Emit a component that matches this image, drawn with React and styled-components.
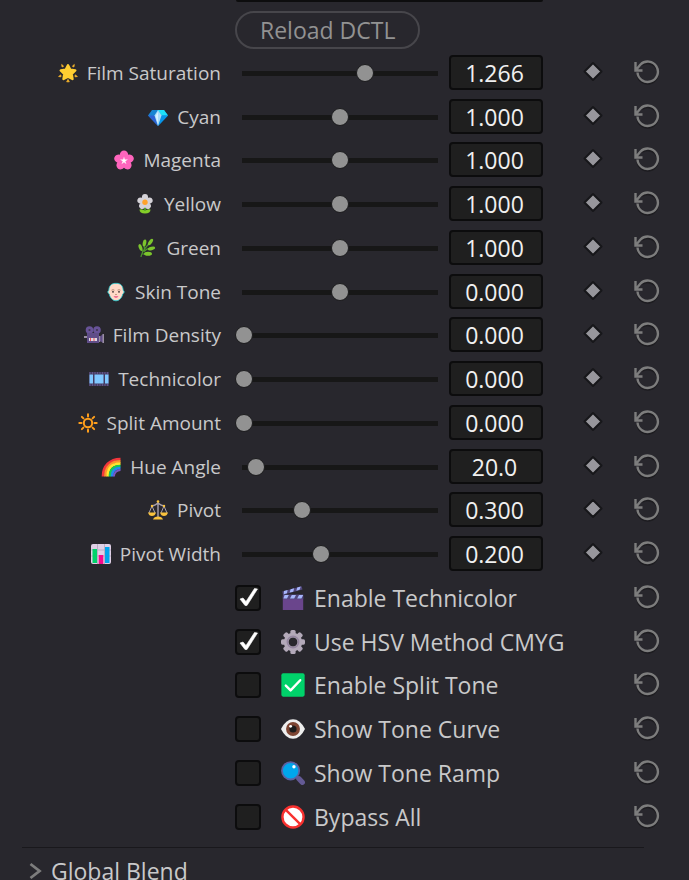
import React, { useState } from "react";
import styled, { createGlobalStyle } from "styled-components";

const GlobalStyle = createGlobalStyle`
  *, *::before, *::after { box-sizing: border-box; }
  body {
    margin: 0;
    background: #28272d;
    color: #c9c9ca;
    font-family: "Open Sans", "Noto Sans", sans-serif;
  }
`;

const Panel = styled.main`
  height: 100vh;
  overflow-y: auto;
  scrollbar-width: none;
  background: #28272d;
`;

const columns = "minmax(0, 221fr) minmax(0, 228fr) 94px 91px 26px";

const Header = styled.header`
  display: grid;
  grid-template-columns: ${columns};
  row-gap: 9px;
  padding: 0 29px 2px 0;
`;

const FieldEdge = styled.div`
  grid-column: 2 / 4;
  height: 2px;
  margin-left: 15px;
  background: #0d0d0e;
  border-radius: 0 0 3px 3px;
`;

const ReloadButton = styled.button`
  grid-column: 2 / 4;
  justify-self: start;
  height: 38px;
  margin-left: 14px;
  padding: 0 23px;
  border: 2px solid #47464b;
  border-radius: 19px;
  background: transparent;
  color: #929292;
  font: inherit;
  font-size: 23px;
  line-height: 34px;
`;

const Controls = styled.ul`
  display: grid;
  grid-auto-rows: 44px 43px 44px 44px;
  margin: 0;
  padding: 0;
  list-style: none;
`;

const Row = styled.li`
  display: grid;
  grid-template-columns: ${columns};
  align-items: start;
  padding-right: 29px;
`;

const ParamLabel = styled.label`
  display: flex;
  align-items: center;
  justify-content: flex-end;
  gap: 9px;
  height: 44px;
  font-size: 19px;
  white-space: nowrap;
`;

const Icon = styled.svg`
  flex: none;
  width: ${(p) => p.$size}px;
  height: ${(p) => p.$size}px;
`;

const SliderCell = styled.div`
  display: flex;
  align-items: center;
  height: 44px;
  padding: 0 4px 0 14px;
`;

const Slider = styled.input`
  appearance: none;
  width: 100%;
  height: 20px;
  margin: 0;
  background: linear-gradient(#171717, #171717) center / calc(100% - 14px) 5px no-repeat;
  &::-webkit-slider-thumb {
    appearance: none;
    width: 18px;
    height: 18px;
    border: 1px solid #1b1b1d;
    border-radius: 50%;
    background: #929292;
  }
`;

const ValueField = styled.input`
  width: 94px;
  height: 35px;
  margin-top: 4px;
  padding: 0 3px 0 0;
  border: 2px solid #0c0c0d;
  border-radius: 4px;
  background: #1f1f1f;
  color: #f0f0f0;
  font: inherit;
  font-size: 23px;
  line-height: 31px;
  text-align: center;
`;

const KeyCell = styled.div`
  display: flex;
  justify-content: center;
  padding: 10px 0 0 9px;
`;

const IconButton = styled.button`
  display: grid;
  padding: 0;
  border: 0;
  background: none;
`;

const ResetButton = styled(IconButton)`
  grid-column: 5;
  margin-top: 8px;
`;

const ToggleLabel = styled.label`
  grid-column: 2 / 5;
  display: flex;
  align-items: center;
  height: 44px;
  padding-left: 14px;
  font-size: 23px;
  white-space: nowrap;
`;

const ToggleText = styled.span`
  margin-left: 9px;
`;

const CheckHolder = styled.span`
  display: grid;
  margin-right: 20px;
  > * { grid-area: 1 / 1; }
`;

const CheckBox = styled.input`
  appearance: none;
  width: 26px;
  height: 26px;
  margin: 0;
  border: 2px solid #0c0c0d;
  border-radius: 4px;
  background: #1f1f1f;
`;

const CheckMark = styled.svg`
  width: 26px;
  height: 26px;
  pointer-events: none;
`;

const Divider = styled.hr`
  height: 1px;
  margin: 9px 45px 0 22px;
  border: 0;
  background: #19181c;
`;

const SectionButton = styled.button`
  display: flex;
  align-items: center;
  gap: 9px;
  height: 46px;
  padding: 0 0 0 28px;
  border: 0;
  background: none;
  color: inherit;
  font: inherit;
  font-size: 23px;
`;

const rays = [0, 45, 90, 135, 180, 225, 270, 315];

const drawings = {
  star: (
    <g fill="#ffce31" stroke="#ffce31" strokeLinejoin="round">
      <path strokeWidth="2.4" d="M10 2.2l2.300 4.500 5 .8-3.600 3.500.8 5-4.500-2.300-4.500 2.300.8-5-3.600-3.500 5-.8z" />
      <path strokeWidth=".8" fill="#f7b52b" stroke="#f7b52b" d="M10 16.400l1.300 2.400H8.700zM3.700 1.500l1.900 1.700-1.500.8zM16.300 1.500l-1.900 1.700 1.500.8zM.6 13.500l2.200-1.600.2 1.900zM19.400 13.500l-2.200-1.600-.2 1.900z" />
    </g>
  ),
  gem: (
    <g>
      <path fill="#1784d2" d="M4 3h12l4 5.500L10 19 0 8.500z" />
      <path fill="#1ee0f8" d="M9.500 3H16l4 5.500h-6.500z" />
      <path fill="#2d62d3" d="M0 8.500h6.500L10 19z" />
      <path fill="#0795e8" d="M13.500 8.500H20L10 19z" />
      <path fill="#a7dcfb" d="M10 3l3.500 5.500L10 19 6.500 8.500z" />
      <path fill="#d6f1ff" d="M10 5v12L7.500 9z" />
    </g>
  ),
  blossom: (
    <g>
      <g fill="#ff65bd">
        {[0, 72, 144, 216, 288].map((a) => (
          <ellipse key={a} cx="10" cy="5" rx="4.200" ry="4.600" transform={`rotate(${a} 10 10.500)`} />
        ))}
        <circle cx="10" cy="10.500" r="4" />
      </g>
      <path fill="#fff" d="M10 6.500l.8 3.100 3.200-.2-2.700 1.800 1.200 3-2.500-2-2.500 2 1.200-3L6 9.400l3.200.2z" />
    </g>
  ),
  daisy: (
    <g>
      <path stroke="#479b22" strokeWidth="2" d="M10 12v6" />
      <path fill="#84ce29" d="M4.500 15.500q4-.6 5.500 1.500 1.500-2.100 5.500-1.500 0 4-5.500 4t-5.500-4z" />
      <g fill="#d5d2d8">
        {[0, 72, 144, 216, 288].map((a) => (
          <ellipse key={a} cx="10" cy="3.500" rx="3.100" ry="3.400" transform={`rotate(${a} 10 8)`} />
        ))}
      </g>
      <circle cx="10" cy="8.300" r="2.700" fill="#ffa32b" />
    </g>
  ),
  herb: (
    <g fill="#7cc52d">
      <path fill="none" stroke="#4d982c" strokeWidth="1.200" d="M4 19Q5 12 14 4M6 14L3.500 10M7.500 12L7 6M7 13.500Q11 9 16 11M5.500 16l6 0" />
      <ellipse cx="3.500" cy="9.500" rx="1.700" ry="3.500" transform="rotate(-20 3.500 9.500)" />
      <ellipse cx="7.500" cy="5" rx="1.800" ry="3.500" transform="rotate(10 7.500 5)" />
      <ellipse cx="13.500" cy="4" rx="1.700" ry="3.800" transform="rotate(35 13.500 4)" />
      <ellipse cx="14.500" cy="10.500" rx="3.700" ry="1.700" transform="rotate(-15 14.500 10.500)" />
      <ellipse cx="11" cy="15.800" rx="4" ry="2" />
    </g>
  ),
  face: (
    <g>
      <path fill="#ffd9c8" stroke="#18c9cf" strokeWidth=".8" d="M10 1.300c5 0 7 2.700 7.200 7.200 1.400.2 1.400 2.700-.4 3.400C16 16 13 18.800 10 18.800S4 16 3.200 11.900c-1.800-.7-1.800-3.200-.4-3.400C3 4 5 1.300 10 1.300z" />
      <path fill="none" stroke="#a6785f" strokeWidth=".8" d="M5.500 8.200q1.500-1 3 0M11.500 8.200q1.500-1 3 0M9.200 12.500h1.600" />
      <circle cx="7" cy="9.800" r=".9" fill="#3c302e" />
      <circle cx="13" cy="9.800" r=".9" fill="#3c302e" />
      <path fill="#e65083" d="M7.500 14.200h5q-2.500 3-5 0z" />
    </g>
  ),
  movieCamera: (
    <g>
      <circle cx="5.500" cy="5" r="3.800" fill="#675397" />
      <circle cx="13" cy="5" r="3.800" fill="#675397" />
      <circle cx="5.500" cy="5" r="1.100" fill="#40354f" />
      <circle cx="13" cy="5" r="1.100" fill="#40354f" />
      <path fill="#5f4d88" d="M3 8h12v10H3zM15 12l4.500-3v9L15 15.500z" />
      <path fill="#998ea2" d="M0 11h3v2H0zM15 11h1.200v6H15zM18.500 9H20v9h-1.500z" />
      <path fill="#ded8e2" d="M5 13h8v3H5z" />
      <path stroke="#e8505b" d="M6.500 13v3M10 13v3" />
    </g>
  ),
  film: (
    <g>
      <path fill="#443b62" d="M0 3h20v14H0z" />
      <path fill="#80c8ff" d="M.5 5.500h3.500v9H.5zM5.500 5.500h9v9h-9zM16 5.500h3.500v9H16z" />
      <path stroke="#8172aa" strokeWidth="1" strokeDasharray="1 1.500" d="M.5 4h19M.5 16h19" />
    </g>
  ),
  sun: (
    <g fill="none" stroke="#ff9f1c" strokeWidth="2" strokeLinecap="round">
      <circle cx="10" cy="10" r="4.200" />
      {rays.map((a) => (
        <path key={a} d="M10 1.300v2.200" transform={`rotate(${a} 10 10)`} />
      ))}
    </g>
  ),
  rainbow: (
    <g fill="none" strokeWidth="2.700">
      <path stroke="#f3363b" d="M2 19.500C2 9 9 2 19.500 2" />
      <path stroke="#ff922e" d="M4.400 19.500C4.400 10 10 4.400 19.500 4.400" />
      <path stroke="#ffe62e" d="M6.700 19.500C6.700 11 11 6.700 19.500 6.700" />
      <path stroke="#14c95b" d="M9 19.500C9 12.500 12.500 9 19.500 9" />
      <path stroke="#268af0" d="M11 19.500C11 14 14 11 19.500 11" />
      <path stroke="#7759c6" strokeWidth="2" d="M12.900 19.500c0-3.600 3-6.600 6.600-6.600" />
    </g>
  ),
  scales: (
    <g fill="none" stroke="#a9a1ad" strokeWidth="1">
      <path strokeWidth="1.400" d="M10 2v16M3 6.500Q8 5 10 3q2 2 7 3.500" />
      <path d="M4 6l-3 7M4 6l3 7M16 6l-3 7M16 6l3 7" />
      <g fill="#f9c23c" stroke="none">
        <path d="M0 12.500h8q-1 3.500-4 3.500t-4-3.500zM12 12.500h8q-1 3.500-4 3.500t-4-3.500zM5 19.500q1-3 5-3t5 3z" />
        <circle cx="10" cy="1.500" r="1.300" />
        <circle cx="4" cy="6" r="1.200" />
        <circle cx="16" cy="6" r="1.200" />
      </g>
    </g>
  ),
  chart: (
    <g>
      <rect width="20" height="20" rx="2" fill="#dfd0e6" />
      <path stroke="#b3a4bc" strokeWidth=".8" d="M0 6h20M0 12h20M6.500 0v20M13.500 0v20" />
      <path fill="#00d26a" d="M1.500 5h4.500v14H1.500z" />
      <path fill="#f70a8d" d="M7.700 11h4.600v9H7.700z" />
      <path fill="#00a6ed" d="M14 3h4.500v16H14z" />
    </g>
  ),
  clapper: (
    <g>
      <path fill="#6a458c" d="M1.500 8.500h17V20h-17z" />
      <path fill="#51477c" d="M1.500 7h17v4h-17zM1 4.500L17.200.2l.7 2.800L1.700 7.300z" />
      <path fill="#a6b5fa" d="M3 7.500h3.500L5 10.500H2zM9 7.500h3.500L11 10.500H7.500zM15 7.500h3.500L17 10.500h-3.500zM2.500 4.200l3-.9L5 6l-2.700.8zM8 2.800l3-.9L10.200 4.700l-3 .8zM13.500 1.200l3-.8L15.500 3.200l-2.700.7z" />
    </g>
  ),
  gear: (
    <g fill="#b3a9b9">
      {rays.map((a) => (
        <rect key={a} x="7.800" y="0" width="4.400" height="5" rx="1.300" transform={`rotate(${a} 10 10)`} />
      ))}
      <path fillRule="evenodd" d="M10 2.300a7.700 7.700 0 1 1 0 15.400 7.700 7.700 0 0 1 0-15.400zm0 4a3.700 3.700 0 1 0 0 7.400 3.700 3.700 0 0 0 0-7.400z" />
      <circle cx="10" cy="10" r="4.700" fill="none" stroke="#9486a0" strokeWidth="1.300" />
    </g>
  ),
  tick: (
    <g>
      <rect x=".3" y=".3" width="19.400" height="19.400" rx="1.500" fill="#00d26a" />
      <path fill="none" stroke="#fff" strokeWidth="2" strokeLinecap="round" strokeLinejoin="round" d="M4 10.500l4 4L16 6" />
    </g>
  ),
  eye: (
    <g>
      <path fill="#eee" d="M0 10Q4 1.800 10 1.800T20 10q-4 8.200-10 8.200T0 10z" />
      <circle cx="10" cy="10" r="5.800" fill="#7d4533" />
      <circle cx="10" cy="10" r="3" fill="#1c1c1c" />
      <circle cx="8" cy="7.800" r="1.200" fill="#fff" />
    </g>
  ),
  lens: (
    <g>
      <path stroke="#635994" strokeWidth="2.500" d="M12 12l3 3" />
      <path stroke="#635994" strokeWidth="4.500" strokeLinecap="round" d="M15 14.800l2.700 2.900" />
      <circle cx="8" cy="8.200" r="7.200" fill="#00a6ed" stroke="#5b61a3" strokeWidth="1.500" />
      <circle cx="10.800" cy="4.800" r="1.400" fill="#fff" />
    </g>
  ),
  ban: (
    <g stroke="#f8312f" strokeWidth="2">
      <circle cx="10" cy="10" r="8.800" fill="#fff" />
      <path d="M4 4l12 12" />
    </g>
  ),
};

const params = [
  { icon: "star", name: "Film Saturation", value: "1.266", position: 63 },
  { icon: "gem", name: "Cyan", value: "1.000", position: 50 },
  { icon: "blossom", name: "Magenta", value: "1.000", position: 50 },
  { icon: "daisy", name: "Yellow", value: "1.000", position: 50 },
  { icon: "herb", name: "Green", value: "1.000", position: 50 },
  { icon: "face", name: "Skin Tone", value: "0.000", position: 50 },
  { icon: "movieCamera", name: "Film Density", value: "0.000", position: 0 },
  { icon: "film", name: "Technicolor", value: "0.000", position: 0 },
  { icon: "sun", name: "Split Amount", value: "0.000", position: 0 },
  { icon: "rainbow", name: "Hue Angle", value: "20.0", position: 6 },
  { icon: "scales", name: "Pivot", value: "0.300", position: 30 },
  { icon: "chart", name: "Pivot Width", value: "0.200", position: 40 },
];

const toggles = [
  { icon: "clapper", name: "Enable Technicolor", on: true },
  { icon: "gear", name: "Use HSV Method CMYG", on: true },
  { icon: "tick", name: "Enable Split Tone", on: false },
  { icon: "eye", name: "Show Tone Curve", on: false },
  { icon: "lens", name: "Show Tone Ramp", on: false },
  { icon: "ban", name: "Bypass All", on: false },
];

function Emoji({ name, size }) {
  return (
    <Icon $size={size} viewBox="0 0 20 20" aria-hidden="true">
      {drawings[name]}
    </Icon>
  );
}

function Reset({ name }) {
  return (
    <ResetButton type="button" aria-label={`Reset ${name}`}>
      <svg width="26" height="26" viewBox="0 0 26 26" fill="none">
        <path stroke="#1d1c20" strokeWidth="2" d="M8 6A10.200 10.200 0 1 1 3.500 16" />
        <path stroke="#7d7d7d" strokeWidth="2.400" d="M1.500 3v8.500H8.500M1.500 11.500l5-6A10.200 10.200 0 1 1 3.500 13.500" />
      </svg>
    </ResetButton>
  );
}

function ParamRow({ icon, name, value, position }) {
  const id = name.toLowerCase().replace(/ /g, "-");
  return (
    <Row>
      <ParamLabel htmlFor={id}>
        <Emoji name={icon} size={20} />
        {name}
      </ParamLabel>
      <SliderCell>
        <Slider id={id} type="range" min="0" max="100" defaultValue={position} />
      </SliderCell>
      <ValueField type="text" aria-label={`${name} value`} defaultValue={value} />
      <KeyCell>
        <IconButton type="button" aria-label={`Keyframe ${name}`}>
          <svg width="20" height="22" viewBox="0 0 20 22">
            <path fill="#97969c" stroke="#17171a" strokeWidth="2" strokeLinejoin="round" d="M10 2l8.500 8.500-8.500 8.500-8.500-8.500z" />
          </svg>
        </IconButton>
      </KeyCell>
      <Reset name={name} />
    </Row>
  );
}

function ToggleRow({ icon, name, on }) {
  const [checked, setChecked] = useState(on);
  return (
    <Row>
      <ToggleLabel>
        <CheckHolder>
          <CheckBox type="checkbox" checked={checked} onChange={(e) => setChecked(e.target.checked)} />
          {checked && (
            <CheckMark viewBox="0 0 26 26" aria-hidden="true">
              <path fill="#fff" stroke="#fff" strokeWidth=".6" d="M5 14l3-1 3 3.500L19.500 3.500l3 .5L12 20.500H10z" />
            </CheckMark>
          )}
        </CheckHolder>
        <Emoji name={icon} size={24} />
        <ToggleText>{name}</ToggleText>
      </ToggleLabel>
      <Reset name={name} />
    </Row>
  );
}

export default function App() {
  return (
    <>
      <GlobalStyle />
      <Panel>
        <Header>
          <FieldEdge />
          <ReloadButton type="button">Reload DCTL</ReloadButton>
        </Header>
        <Controls>
          {params.map((p) => (
            <ParamRow key={p.name} {...p} />
          ))}
          {toggles.map((t) => (
            <ToggleRow key={t.name} {...t} />
          ))}
        </Controls>
        <Divider />
        <SectionButton type="button" aria-expanded="false">
          <svg width="14" height="18" viewBox="0 0 14 18" fill="none" aria-hidden="true">
            <path stroke="#7d7d7d" strokeWidth="2.800" d="M2.500 2l9 7-9 7" />
          </svg>
          Global Blend
        </SectionButton>
      </Panel>
    </>
  );
}
